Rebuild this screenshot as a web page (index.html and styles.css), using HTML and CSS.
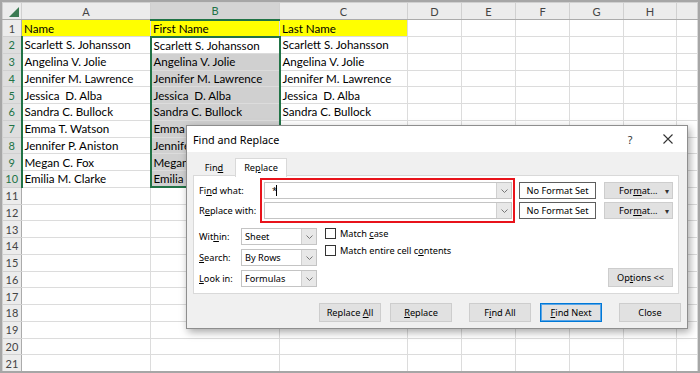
FILE: index.html
```html
<!DOCTYPE html>
<html lang="en">
<head>
    <meta charset="UTF-8">
    <meta name="viewport" content="width=device-width, initial-scale=1.0">
    <title>Find and Replace</title>
    <link rel="stylesheet" href="styles.css">
</head>
<body>
    <div class="frame">
        <table class="sheet">
            <colgroup>
                <col style="width:19px"><col style="width:129px"><col style="width:129px"><col style="width:128px">
                <col style="width:54px"><col style="width:54px"><col style="width:54px"><col style="width:54px"><col style="width:53px"><col>
            </colgroup>
            <tr class="colhead">
                <th class="corner"><span class="tri"></span></th><th>A</th><th class="on">B</th><th>C</th><th>D</th><th>E</th><th>F</th><th>G</th><th>H</th><th></th>
            </tr>
            <tr><th class="rh">1</th><td class="yel">Name</td><td class="yel">First Name</td><td class="yel">Last Name</td><td></td><td></td><td></td><td></td><td></td><td></td></tr>
            <tr><th class="rh on">2</th><td>Scarlett S. Johansson</td><td class="sel first">Scarlett S. Johansson</td><td>Scarlett S. Johansson</td><td></td><td></td><td></td><td></td><td></td><td></td></tr>
            <tr><th class="rh on">3</th><td>Angelina V. Jolie</td><td class="sel shade">Angelina V. Jolie</td><td>Angelina V. Jolie</td><td></td><td></td><td></td><td></td><td></td><td></td></tr>
            <tr><th class="rh on">4</th><td>Jennifer M. Lawrence</td><td class="sel shade">Jennifer M. Lawrence</td><td>Jennifer M. Lawrence</td><td></td><td></td><td></td><td></td><td></td><td></td></tr>
            <tr><th class="rh on">5</th><td>Jessica &nbsp;D. Alba</td><td class="sel shade">Jessica &nbsp;D. Alba</td><td>Jessica &nbsp;D. Alba</td><td></td><td></td><td></td><td></td><td></td><td></td></tr>
            <tr><th class="rh on">6</th><td>Sandra C. Bullock</td><td class="sel shade">Sandra C. Bullock</td><td>Sandra C. Bullock</td><td></td><td></td><td></td><td></td><td></td><td></td></tr>
            <tr><th class="rh on">7</th><td>Emma T. Watson</td><td class="sel shade">Emma T. Watson</td><td>Emma T. Watson</td><td></td><td></td><td></td><td></td><td></td><td></td></tr>
            <tr><th class="rh on">8</th><td>Jennifer P. Aniston</td><td class="sel shade">Jennifer P. Aniston</td><td>Jennifer P. Aniston</td><td></td><td></td><td></td><td></td><td></td><td></td></tr>
            <tr><th class="rh on">9</th><td>Megan C. Fox</td><td class="sel shade">Megan C. Fox</td><td>Megan C. Fox</td><td></td><td></td><td></td><td></td><td></td><td></td></tr>
            <tr><th class="rh on">10</th><td>Emilia M. Clarke</td><td class="sel shade last">Emilia M. Clarke</td><td>Emilia M. Clarke</td><td></td><td></td><td></td><td></td><td></td><td></td></tr>
            <tr><th class="rh">11</th><td></td><td></td><td></td><td></td><td></td><td></td><td></td><td></td><td></td></tr>
            <tr><th class="rh">12</th><td></td><td></td><td></td><td></td><td></td><td></td><td></td><td></td><td></td></tr>
            <tr><th class="rh">13</th><td></td><td></td><td></td><td></td><td></td><td></td><td></td><td></td><td></td></tr>
            <tr><th class="rh">14</th><td></td><td></td><td></td><td></td><td></td><td></td><td></td><td></td><td></td></tr>
            <tr><th class="rh">15</th><td></td><td></td><td></td><td></td><td></td><td></td><td></td><td></td><td></td></tr>
            <tr><th class="rh">16</th><td></td><td></td><td></td><td></td><td></td><td></td><td></td><td></td><td></td></tr>
            <tr><th class="rh">17</th><td></td><td></td><td></td><td></td><td></td><td></td><td></td><td></td><td></td></tr>
            <tr><th class="rh">18</th><td></td><td></td><td></td><td></td><td></td><td></td><td></td><td></td><td></td></tr>
            <tr><th class="rh">19</th><td></td><td></td><td></td><td></td><td></td><td></td><td></td><td></td><td></td></tr>
            <tr><th class="rh">20</th><td></td><td></td><td></td><td></td><td></td><td></td><td></td><td></td><td></td></tr>
            <tr><th class="rh">21</th><td></td><td></td><td></td><td></td><td></td><td></td><td></td><td></td><td></td></tr>
        </table>

        <div class="dialog">
            <div class="dlg-title">
                <span class="dlg-name">Find and Replace</span>
                <span class="dlg-ctrl">?</span>
                <span class="dlg-ctrl">
                    <svg width="10" height="10" viewBox="0 0 10 10"><path d="M0.5 0.5 L9.5 9.5 M9.5 0.5 L0.5 9.5" stroke="#333" stroke-width="1.1" fill="none"/></svg>
                </span>
            </div>
            <div class="dlg-body">
                <div class="tabs">
                    <span class="tab">Fin<u>d</u></span>
                    <span class="tab active">Re<u>p</u>lace</span>
                </div>
                <div class="panel">
                    <div class="find-row">
                        <div class="labels">
                            <span class="lbl">Fi<u>n</u>d what:</span>
                            <span class="lbl">R<u>e</u>place with:</span>
                        </div>
                        <div class="redbox">
                            <div class="combo">
                                <span class="combo-val">*<span class="caret"></span></span>
                                <span class="drop"><svg width="7" height="4" viewBox="0 0 7 4"><path d="M0.5 0.5 L3.5 3.5 L6.5 0.5" stroke="#777" fill="none"/></svg></span>
                            </div>
                            <div class="combo">
                                <span class="combo-val"></span>
                                <span class="drop"><svg width="7" height="4" viewBox="0 0 7 4"><path d="M0.5 0.5 L3.5 3.5 L6.5 0.5" stroke="#777" fill="none"/></svg></span>
                            </div>
                        </div>
                        <div class="fmt-col">
                            <div class="fmt-row">
                                <span class="preview">No Format Set</span>
                                <span class="btn fmt"><span>For<u>m</u>at...</span><span class="fmt-arrow">&#9662;</span></span>
                            </div>
                            <div class="fmt-row">
                                <span class="preview">No Format Set</span>
                                <span class="btn fmt"><span>For<u>m</u>at...</span><span class="fmt-arrow">&#9662;</span></span>
                            </div>
                        </div>
                    </div>

                    <div class="opt-row">
                        <div class="selects">
                            <div class="sel-row">
                                <span class="sel-lbl">Wit<u>h</u>in:</span>
                                <span class="select"><span class="select-val">Sheet</span><span class="drop"><svg width="7" height="4" viewBox="0 0 7 4"><path d="M0.5 0.5 L3.5 3.5 L6.5 0.5" stroke="#777" fill="none"/></svg></span></span>
                            </div>
                            <div class="sel-row">
                                <span class="sel-lbl"><u>S</u>earch:</span>
                                <span class="select"><span class="select-val">By Rows</span><span class="drop"><svg width="7" height="4" viewBox="0 0 7 4"><path d="M0.5 0.5 L3.5 3.5 L6.5 0.5" stroke="#777" fill="none"/></svg></span></span>
                            </div>
                            <div class="sel-row">
                                <span class="sel-lbl"><u>L</u>ook in:</span>
                                <span class="select"><span class="select-val">Formulas</span><span class="drop"><svg width="7" height="4" viewBox="0 0 7 4"><path d="M0.5 0.5 L3.5 3.5 L6.5 0.5" stroke="#777" fill="none"/></svg></span></span>
                            </div>
                        </div>
                        <div class="checks">
                            <div class="check"><span class="box"></span><span>Match <u>c</u>ase</span></div>
                            <div class="check"><span class="box"></span><span>Match entire cell c<u>o</u>ntents</span></div>
                        </div>
                        <span class="btn options">Op<u>t</u>ions &lt;&lt;</span>
                    </div>
                </div>

                <div class="actions">
                    <span class="btn act">Replace <u>A</u>ll</span>
                    <span class="btn act near"><u>R</u>eplace</span>
                    <span class="btn act far">F<u>i</u>nd All</span>
                    <span class="btn act near default"><u>F</u>ind Next</span>
                    <span class="btn act far">Close</span>
                </div>
            </div>
        </div>
    </div>
</body>
</html>
```

FILE: styles.css
```css
* {
    box-sizing: border-box;
}

body {
    margin: 0;
    background: #fff;
    font-family: Lato, "Liberation Sans", sans-serif;
}

.frame {
    position: relative;
    width: 700px;
    height: 373px;
    border: 2px solid #a6a6a6;
    overflow: hidden;
    background: #fff;
}

/* spreadsheet */
.sheet {
    border-collapse: collapse;
    table-layout: fixed;
    width: 696px;
}

.sheet tr {
    height: 16.75px;
}

.sheet .colhead {
    height: 17px;
}

.sheet td,
.sheet th {
    border: 1px solid #dcdcdc;
    padding: 1px 2px 0 2px;
    font-size: 11.6px;
    line-height: 14px;
    white-space: nowrap;
    overflow: hidden;
    text-align: left;
    font-weight: normal;
    color: #000;
}

.colhead th {
    background: #ececec;
    color: #444;
    text-align: center;
    border-color: #d0d0d0;
    border-bottom-color: #ababab;
    font-size: 11px;
}

.colhead th.on {
    background: #d4d4d4;
    color: #217346;
    border-bottom: 2px solid #217346;
}

.corner {
    position: relative;
}

.tri {
    position: absolute;
    right: 2px;
    bottom: 2px;
    width: 0;
    height: 0;
    border-left: 10px solid transparent;
    border-bottom: 10px solid #3b7a52;
}

.rh {
    background: #ececec;
    text-align: center !important;
    color: #444 !important;
    border-color: #d0d0d0 #ababab #d0d0d0 #d0d0d0 !important;
    padding: 1px 0 0 0 !important;
    font-size: 11px !important;
}

.rh.on {
    background: #dedede;
    color: #217346 !important;
    border-right: 2px solid #217346 !important;
}

.yel {
    background: #ffff00;
}

.sel {
    border-left: 2px solid #217346 !important;
    border-right: 2px solid #217346 !important;
}

.sel.first {
    border-top: 2px solid #217346 !important;
}

.sel.last {
    border-bottom: 2px solid #217346 !important;
}

.sel.shade {
    background: #d0d0d0;
}

/* dialog */
.dialog {
    position: absolute;
    left: 184px;
    top: 123px;
    width: 502px;
    height: 204px;
    background: #f0f0f0;
    border: 1px solid #8e8e8e;
    box-shadow: 2px 3px 8px rgba(0, 0, 0, 0.35);
    font-family: "Noto Sans", "Open Sans", sans-serif;
    font-size: 9.2px;
    color: #000;
    display: flex;
    flex-direction: column;
    white-space: nowrap;
}

.dlg-title {
    height: 26px;
    background: #fff;
    display: flex;
    align-items: center;
    padding-left: 6px;
    font-size: 10.8px;
}

.dlg-name {
    flex: 1;
}

.dlg-ctrl {
    width: 38px;
    color: #333;
    display: flex;
    justify-content: center;
    align-items: center;
}

.dlg-body {
    padding: 6px 8px 0 6px;
    display: flex;
    flex-direction: column;
}

.tabs {
    display: flex;
    height: 18px;
    margin-bottom: -1px;
}

.tab {
    width: 42px;
    text-align: center;
    line-height: 18px;
    padding-top: 1px;
}

.tab.active {
    width: 52px;
    height: 19px;
    background: #fff;
    border: 1px solid #d9d9d9;
    border-bottom: none;
    position: relative;
    z-index: 1;
    padding-top: 0;
}

.panel {
    height: 119px;
    background: #fff;
    border: 1px solid #d9d9d9;
    padding: 2px 5px 6px 5px;
    display: flex;
    flex-direction: column;
}

.find-row {
    display: flex;
    align-items: flex-start;
}

.labels {
    width: 61px;
    padding-top: 4px;
    display: flex;
    flex-direction: column;
    gap: 3px;
}

.lbl {
    height: 17px;
    line-height: 17px;
}

.redbox {
    width: 255px;
    border: 2px solid #e8131b;
    padding: 2px 1px 2px 2px;
    display: flex;
    flex-direction: column;
    gap: 3px;
}

.combo {
    height: 17px;
    border: 1px solid #c4c4c4;
    display: flex;
}

.combo-val {
    flex: 1;
    padding-left: 7px;
    line-height: 15px;
    display: flex;
    align-items: center;
}

.caret {
    display: inline-block;
    width: 1px;
    height: 11px;
    background: #000;
    margin-left: -1px;
}

.drop {
    width: 15px;
    background: #e8e8e8;
    border-left: 1px solid #d0d0d0;
    display: flex;
    align-items: center;
    justify-content: center;
}

.fmt-col {
    margin-left: 4px;
    padding-top: 4px;
    display: flex;
    flex-direction: column;
    gap: 3px;
}

.fmt-row {
    display: flex;
    gap: 8px;
}

.preview {
    width: 77px;
    height: 17px;
    border: 1px solid #5e5e5e;
    background: #fff;
    text-align: center;
    line-height: 15px;
}

.btn {
    display: block;
    background: #e1e1e1;
    border: 1px solid #cdcdcd;
    text-align: center;
}

.fmt {
    display: flex;
    align-items: center;
    width: 69px;
    height: 17px;
    padding: 0 3px 0 14px;
}

.fmt-arrow {
    margin-left: auto;
    font-size: 8px;
    color: #333;
}

.opt-row {
    display: flex;
    margin-top: 5px;
    flex: 1;
}

.selects {
    display: flex;
    flex-direction: column;
    gap: 4px;
}

.sel-row {
    display: flex;
    align-items: center;
    height: 17px;
}

.sel-lbl {
    width: 42px;
}

.select {
    width: 76px;
    height: 17px;
    border: 1px solid #c4c4c4;
    display: flex;
}

.select-val {
    flex: 1;
    padding-left: 3px;
    line-height: 15px;
}

.checks {
    margin-left: 8px;
    display: flex;
    flex-direction: column;
}

.check {
    height: 17px;
    display: flex;
    align-items: flex-start;
    line-height: 11px;
}

.box {
    width: 11px;
    height: 11px;
    border: 1px solid #333;
    background: #fff;
    margin-right: 4px;
}

.options {
    margin-left: auto;
    align-self: flex-end;
    width: 65px;
    height: 19px;
    line-height: 17px;
}

.actions {
    display: flex;
    justify-content: flex-end;
    margin-top: 9px;
    margin-right: -2px;
}

.act {
    width: 62px;
    height: 19px;
    line-height: 17px;
}

.act.near {
    margin-left: 9px;
}

.act.far {
    margin-left: 17px;
}

.act.default {
    border-color: #0078d7;
    box-shadow: inset 0 0 0 1px #5aa5e6;
}
```
